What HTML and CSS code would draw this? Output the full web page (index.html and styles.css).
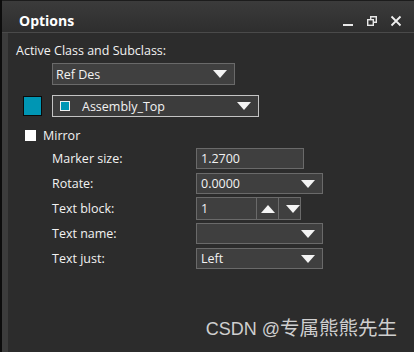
FILE: index.html
```html
<!DOCTYPE html>
<html lang="en">
<head>
    <meta charset="UTF-8">
    <title>Options</title>
    <link rel="stylesheet" href="styles.css">
</head>
<body>
    <div class="window">
        <div class="titlebar">
            <span class="title">Options</span>
            <div class="controls">
                <svg class="ctl" width="12" height="12" viewBox="0 0 12 12"><rect x="1" y="9" width="10" height="2" fill="#e8e8e8"/></svg>
                <svg class="ctl" width="12" height="12" viewBox="0 0 12 12"><g fill="none" stroke="#e8e8e8" stroke-width="1.4"><rect x="1.7" y="4.7" width="5.6" height="5.6"/><path d="M4.7 4.7V1.7h5.6v5.6H7.3"/></g></svg>
                <svg class="ctl" width="12" height="12" viewBox="0 0 12 12"><path d="M1.5 1.5l9 9M10.5 1.5l-9 9" stroke="#f0f0f0" stroke-width="1.8"/></svg>
            </div>
        </div>
        <div class="content">
            <div class="caption">Active Class and Subclass:</div>
            <div class="combo class-combo">
                <span>Ref Des</span>
                <span class="arrow"></span>
            </div>
            <div class="subclass-row">
                <span class="swatch"></span>
                <div class="combo subclass-combo">
                    <span class="mini-swatch"></span>
                    <span>Assembly_Top</span>
                    <span class="arrow"></span>
                </div>
            </div>
            <div class="check-row">
                <span class="checkbox"></span>
                <span>Mirror</span>
            </div>
            <div class="fields">
                <div class="field">
                    <label>Marker size:</label>
                    <div class="box marker">1.2700</div>
                </div>
                <div class="field">
                    <label>Rotate:</label>
                    <div class="box wide">0.0000<span class="arrow"></span></div>
                </div>
                <div class="field">
                    <label>Text block:</label>
                    <div class="spin">
                        <div class="spin-value">1</div>
                        <div class="spin-btn"><span class="arrow up"></span></div>
                        <div class="spin-btn"><span class="arrow"></span></div>
                    </div>
                </div>
                <div class="field">
                    <label>Text name:</label>
                    <div class="box wide"><span></span><span class="arrow"></span></div>
                </div>
                <div class="field">
                    <label>Text just:</label>
                    <div class="box wide">Left<span class="arrow"></span></div>
                </div>
            </div>
            <div class="watermark">CSDN @<span class="cjk">专属熊熊先生</span></div>
        </div>
    </div>
</body>
</html>
```

FILE: styles.css
```css
body {
    margin: 0;
    background: #0c0c0c;
    font-family: "Open Sans", "Noto Sans", sans-serif;
    font-size: 12.5px;
    color: #f2f2f2;
    height: 352px;
    overflow: hidden;
}

.window {
    margin-left: 2px;
    padding-top: 1px;
    height: 351px;
    display: flex;
    flex-direction: column;
    background: #1c1c1c;
}

.titlebar {
    height: 25px;
    display: flex;
    align-items: center;
    justify-content: space-between;
    padding: 6px 12px 0 17px;
    background: linear-gradient(#3b3b3b, #2e2e2e);
    border-bottom: 1px solid #4a4a4a;
}

.title {
    font-weight: bold;
    font-size: 14px;
    color: #fff;
    padding-top: 2px;
}

.controls {
    display: flex;
    gap: 12px;
    padding-top: 2px;
}

.content {
    flex: 1;
    background: #2c2c2c;
    border-left: 6px solid #3c3c3c;
    padding: 8px 0 0 8px;
    position: relative;
}

.caption {
    height: 20px;
    line-height: 20px;
}

.combo {
    display: flex;
    align-items: center;
    height: 20px;
    background: #404040;
    border: 1px solid #6a6a6a;
    padding: 0 7px 0 3px;
}

.class-combo {
    width: 171px;
    margin: 2px 0 0 36px;
}

.arrow {
    margin-left: auto;
    width: 0;
    height: 0;
    border-left: 7px solid transparent;
    border-right: 7px solid transparent;
    border-top: 8px solid #f4f4f4;
}

.arrow.up {
    border-top: 0;
    border-bottom: 8px solid #f4f4f4;
    margin: 0;
}

.subclass-row {
    display: flex;
    align-items: center;
    margin-top: 10px;
}

.swatch {
    width: 17px;
    height: 18px;
    background: #0096b4;
    border: 1px solid #0a0a0a;
    margin-left: 7px;
}

.subclass-combo {
    width: 191px;
    margin-left: 10px;
    border-color: #c4c4c4;
    background: #3c3c3c;
    padding-left: 7px;
}

.mini-swatch {
    width: 8px;
    height: 8px;
    background: #0096b4;
    border: 1px solid #f0f0f0;
    margin-right: 12px;
}

.check-row {
    display: flex;
    align-items: center;
    margin-top: 8px;
    height: 20px;
}

.checkbox {
    width: 11px;
    height: 11px;
    background: #fff;
    margin: 0 7px 0 9px;
}

.fields {
    display: flex;
    flex-direction: column;
    gap: 4px;
    margin-top: 3px;
}

.field {
    display: flex;
    align-items: center;
    height: 21px;
}

.field label {
    width: 144px;
    padding-left: 36px;
}

.box {
    display: flex;
    align-items: center;
    height: 19px;
    background: #3f3f3f;
    border: 1px solid #6a6a6a;
    padding: 0 7px 0 4px;
}

.marker {
    width: 95px;
}

.wide {
    width: 114px;
}

.spin {
    display: flex;
    height: 21px;
    border: 1px solid #6a6a6a;
    background: #3f3f3f;
}

.spin-value {
    width: 55px;
    padding-left: 4px;
    line-height: 21px;
}

.spin-btn {
    width: 21px;
    display: flex;
    align-items: center;
    justify-content: center;
    border-left: 1px solid #6a6a6a;
}

.watermark {
    position: absolute;
    right: 17px;
    bottom: 11px;
    font-family: "Liberation Sans", sans-serif;
    font-size: 18px;
    color: #cfcfcf;
}

.cjk {
    font-family: "Noto Sans CJK SC", sans-serif;
    font-size: 19.5px;
}
```
